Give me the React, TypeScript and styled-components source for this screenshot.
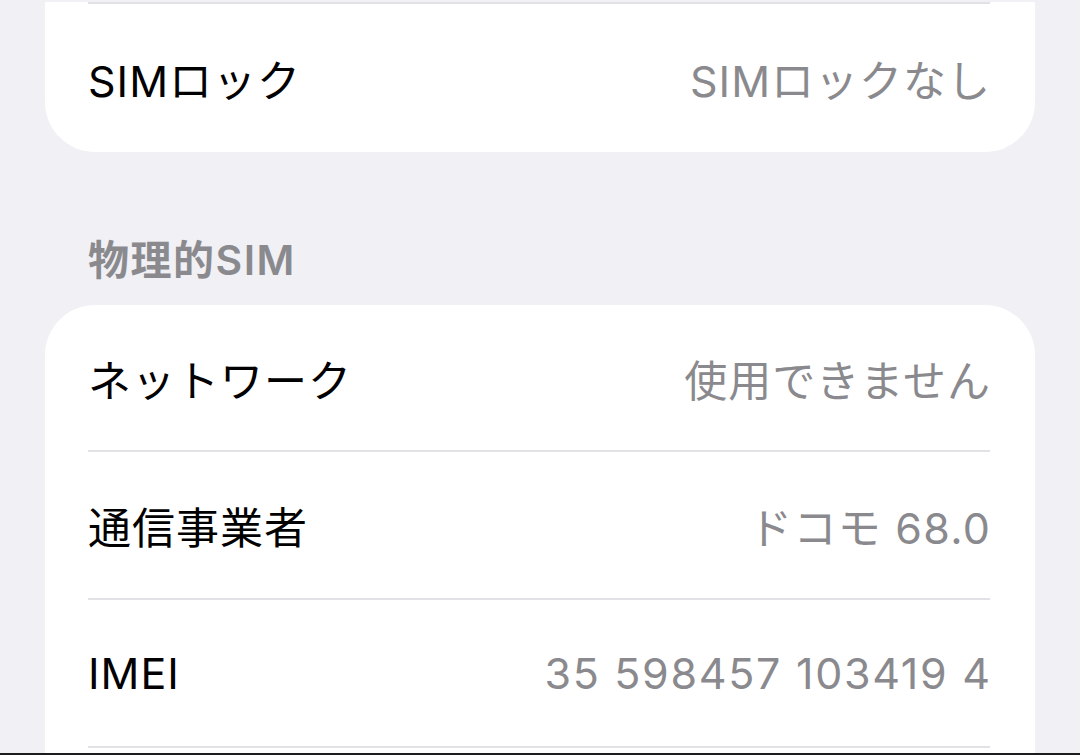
import React from "react";
import styled, { createGlobalStyle } from "styled-components";

const GlobalStyle = createGlobalStyle`
  html, body {
    margin: 0;
    padding: 0;
    background: #f0f0f5;
  }
  body {
    font-family: Inter, "Noto Sans CJK JP", "Noto Sans", sans-serif;
    -webkit-font-smoothing: antialiased;
  }
`;

const Page = styled.div`
  width: 1080px;
  height: 755px;
  overflow: hidden;
  display: flex;
  flex-direction: column;
  background: #f0f0f5;
  padding: 0 45px;
  box-sizing: border-box;
`;

const Card = styled.section<{ $clipTop?: boolean; $clipBottom?: boolean; $grow?: boolean }>`
  background: #ffffff;
  border-radius: ${(p) => (p.$clipTop ? "0 0 50px 50px" : p.$clipBottom ? "50px 50px 0 0" : "50px")};
  display: flex;
  flex-direction: column;
  flex: ${(p) => (p.$grow ? "1 1 auto" : "0 0 auto")};
`;

const Separator = styled.div`
  height: 2px;
  margin: 0 45px 0 43px;
  background: #e2e2e6;
  flex: 0 0 auto;
`;

const Row = styled.div<{ $h?: number }>`
  height: ${(p) => p.$h ?? 146}px;
  display: flex;
  align-items: center;
  justify-content: space-between;
  padding: 0 45px 0 43px;
  flex: 0 0 auto;
`;

const Label = styled.span`
  font-size: 43px;
  color: #000000;
  font-weight: 400;
  letter-spacing: 1px;
`;

const Value = styled.span<{ $spacing?: number }>`
  font-size: 43px;
  color: #8a8a8e;
  font-weight: 400;
  text-align: right;
  letter-spacing: ${(p) => p.$spacing ?? 1}px;
  margin-right: ${(p) => -(p.$spacing ?? 1)}px;
`;

const SectionHeader = styled.h2`
  margin: 0;
  padding: 84px 0 21px 43px;
  font-size: 41px;
  line-height: 48px;
  font-weight: 600;
  color: #8a8a8e;
  letter-spacing: 1.5px;
`;

const Spacer = styled.div`
  height: 2px;
  flex: 0 0 auto;
`;

const BottomEdge = styled.div`
  height: 2px;
  margin: 0 -45px;
  background: #1c1c1e;
  flex: 0 0 auto;
`;

type Item = { label: string; value: string; spacing?: number };

const physical: Item[] = [
  { label: "ネットワーク", value: "使用できません" },
  { label: "通信事業者", value: "ドコモ 68.0", spacing: 1.3 },
  { label: "IMEI", value: "35 598457 103419 4", spacing: 1.7 },
];

export default function App() {
  return (
    <>
      <GlobalStyle />
      <Page>
        <Spacer />
        <Card $clipTop>
          <Separator />
          <Row $h={148}>
            <Label>SIMロック</Label>
            <Value>SIMロックなし</Value>
          </Row>
        </Card>
        <SectionHeader>物理的SIM</SectionHeader>
        <Card $clipBottom $grow>
          {physical.map((item, i) => (
            <React.Fragment key={item.label}>
              {i > 0 && <Separator />}
              <Row $h={i === 0 ? 145 : 146}>
                <Label>{item.label}</Label>
                <Value $spacing={item.spacing}>{item.value}</Value>
              </Row>
            </React.Fragment>
          ))}
          <Separator />
        </Card>
        <BottomEdge />
      </Page>
    </>
  );
}
